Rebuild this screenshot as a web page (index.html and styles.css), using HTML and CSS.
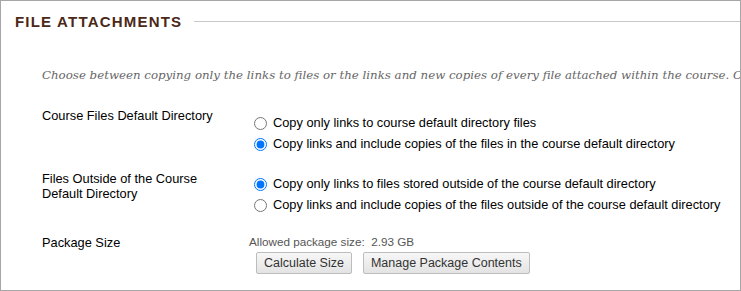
FILE: index.html
```html
<!DOCTYPE html>
<html lang="en">
<head>
    <meta charset="UTF-8">
    <meta name="viewport" content="width=device-width, initial-scale=1.0">
    <title>File Attachments</title>
    <link rel="stylesheet" href="styles.css">
</head>
<body>
    <div class="panel">
        <div class="section-head">
            <h2>File Attachments</h2>
            <span class="rule"></span>
        </div>

        <p class="instructions">Choose between copying only the links to files or the links and new copies of every file attached within the course. Click Calculate Size to find out the size of the package.</p>

        <div class="field-row row-course">
            <div class="field-label">Course Files Default Directory</div>
            <div class="field">
                <label class="option"><input type="radio" name="courseFiles"> Copy only links to course default directory files</label>
                <label class="option"><input type="radio" name="courseFiles" checked> Copy links and include copies of the files in the course default directory</label>
            </div>
        </div>

        <div class="field-row row-outside">
            <div class="field-label">Files Outside of the Course Default Directory</div>
            <div class="field">
                <label class="option"><input type="radio" name="outsideFiles" checked> Copy only links to files stored outside of the course default directory</label>
                <label class="option"><input type="radio" name="outsideFiles"> Copy links and include copies of the files outside of the course default directory</label>
            </div>
        </div>

        <div class="field-row row-package">
            <div class="field-label">Package Size</div>
            <div class="field">
                <div class="allowed">Allowed package size:&nbsp; 2.93 GB</div>
                <div class="buttons">
                    <button type="button">Calculate Size</button>
                    <button type="button">Manage Package Contents</button>
                </div>
            </div>
        </div>
    </div>
</body>
</html>
```

FILE: styles.css
```css
* {
    margin: 0;
    padding: 0;
    box-sizing: border-box;
}

body {
    font-family: "Liberation Sans", Arial, sans-serif;
    font-size: 12.8px;
    color: #000;
    background: #fff;
}

.panel {
    width: 741px;
    height: 291px;
    border: 1px solid #a6a6a6;
    padding: 11px 0 0 14px;
    overflow: hidden;
}

.section-head {
    display: flex;
    align-items: center;
    height: 19px;
}

.section-head h2 {
    font-size: 15px;
    font-weight: bold;
    letter-spacing: 1.2px;
    text-transform: uppercase;
    color: #4b2818;
    line-height: 19px;
    white-space: nowrap;
}

.section-head .rule {
    flex: 1;
    height: 1px;
    background: #c8c8c8;
    margin-left: 12px;
}

.instructions {
    margin: 35px 0 0 27px;
    font-family: "DejaVu Serif", Georgia, serif;
    font-style: italic;
    font-size: 11.8px;
    line-height: 18px;
    color: #666;
    white-space: nowrap;
}

.field-row {
    display: flex;
    padding-left: 27px;
}

.field-label {
    width: 207px;
    line-height: 15px;
    padding-right: 30px;
}

.field {
    flex: 1;
}

.row-course {
    margin-top: 24px;
}

.row-course .field {
    padding-top: 4px;
}

.row-outside {
    margin-top: 17px;
}

.row-outside .field {
    padding-top: 2px;
}

.row-package {
    margin-top: 20px;
}

.option {
    display: flex;
    align-items: center;
    height: 21px;
    padding-left: 5px;
    white-space: nowrap;
}

.option input {
    width: 13px;
    height: 13px;
    margin: 1px 6px 0 0;
}

.allowed {
    font-size: 11.7px;
    line-height: 14px;
    color: #555;
}

.buttons {
    display: flex;
    gap: 11px;
    margin: 3px 0 0 7px;
}

.buttons button {
    height: 22px;
    padding: 0 7px;
    font-family: "Liberation Sans", Arial, sans-serif;
    font-size: 12.5px;
    color: #333;
    background: linear-gradient(#f7f7f7, #e3e3e3);
    border: 1px solid #bdbdbd;
    border-radius: 2px;
}
```
